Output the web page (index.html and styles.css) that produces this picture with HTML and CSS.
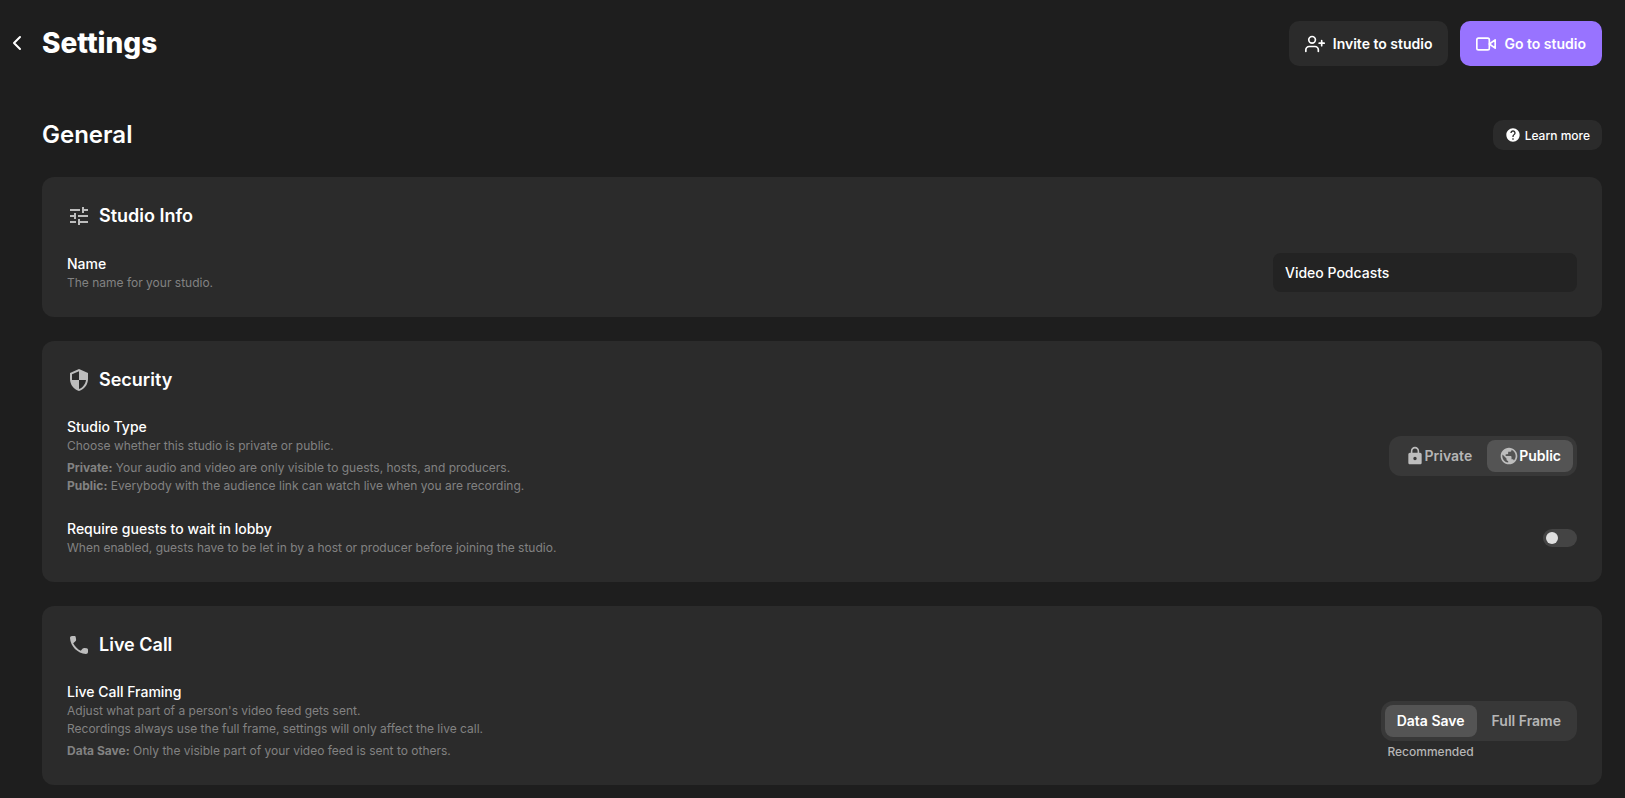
FILE: index.html
```
<!DOCTYPE html>
<html lang="en">
    <head>
        <meta charset="UTF-8">
        <meta name="viewport" content="width=device-width, initial-scale=1.0">
        <title>Settings</title>
        <link rel="stylesheet" href="styles.css">
    </head>
    <body>
        <header class="topbar">
            <button type="button" class="back" aria-label="Back">
                <svg width="24" height="24" viewBox="0 0 24 24" fill="none" stroke="currentColor" stroke-width="2" stroke-linecap="round" stroke-linejoin="round"><path d="M15 17l-6-6 6-6"/></svg>
            </button>
            <h1>Settings</h1>
            <div class="actions">
                <button type="button" class="btn">
                    <svg width="20" height="20" viewBox="0 0 24 24" fill="none" stroke="currentColor" stroke-width="2" stroke-linecap="round" stroke-linejoin="round"><path d="M16 21v-2a4 4 0 0 0-4-4H5a4 4 0 0 0-4 4v2"/><circle cx="8.5" cy="7" r="4"/><path d="M20 8v6M23 11h-6"/></svg>
                    Invite to studio
                </button>
                <button type="button" class="btn btn-primary">
                    <svg width="20" height="20" viewBox="0 0 24 24" fill="none" stroke="currentColor" stroke-width="2" stroke-linecap="round" stroke-linejoin="round"><path d="M23 7l-7 5 7 5V7z"/><rect x="1" y="5" width="15" height="14" rx="2"/></svg>
                    Go to studio
                </button>
            </div>
        </header>

        <main>
            <div class="section-head">
                <h2>General</h2>
                <button type="button" class="btn-small">
                    <svg width="16" height="16" viewBox="0 0 24 24" fill="currentColor"><path d="M12 2C6.48 2 2 6.48 2 12s4.48 10 10 10 10-4.48 10-10S17.52 2 12 2zm1 17h-2v-2h2v2zm2.07-7.75l-.9.92C13.45 12.9 13 13.5 13 15h-2v-.5c0-1.1.45-2.1 1.17-2.83l1.24-1.26c.37-.36.59-.86.59-1.41 0-1.1-.9-2-2-2s-2 .9-2 2H8c0-2.21 1.79-4 4-4s4 1.79 4 4c0 .88-.36 1.68-.93 2.25z"/></svg>
                    Learn more
                </button>
            </div>

            <section class="card">
                <h3>
                    <svg width="24" height="24" viewBox="0 0 24 24" fill="currentColor"><path d="M3 17v2h6v-2H3zM3 5v2h10V5H3zm10 16v-2h8v-2h-8v-2h-2v6h2zM7 9v2H3v2h4v2h2V9H7zm14 4v-2H11v2h10zm-6-4h2V7h4V5h-4V3h-2v6z"/></svg>
                    Studio Info
                </h3>
                <div class="row">
                    <div class="info">
                        <label class="title" for="studioName">Name</label>
                        <p>The name for your studio.</p>
                    </div>
                    <input type="text" class="text-input" id="studioName" value="Video Podcasts">
                </div>
            </section>

            <section class="card">
                <h3>
                    <svg width="24" height="24" viewBox="0 0 24 24" fill="currentColor"><path d="M12 1L3 5v6c0 5.55 3.84 10.74 9 12 5.16-1.26 9-6.45 9-12V5l-9-4zm0 10.99h7c-.53 4.12-3.28 7.79-7 8.94V12H5V6.3l7-3.11v8.8z"/></svg>
                    Security
                </h3>
                <div class="row">
                    <div class="info">
                        <div class="title" id="typeTitle">Studio Type</div>
                        <p>Choose whether this studio is private or public.</p>
                        <p class="detail"><b>Private:</b> Your audio and video are only visible to guests, hosts, and producers.</p>
                        <p><b>Public:</b> Everybody with the audience link can watch live when you are recording.</p>
                    </div>
                    <div class="segmented" role="radiogroup" aria-labelledby="typeTitle">
                        <input type="radio" name="studioType" id="typePrivate">
                        <label for="typePrivate">
                            <svg width="20" height="20" viewBox="0 0 24 24" fill="currentColor"><path d="M18 8h-1V6c0-2.76-2.24-5-5-5S7 3.24 7 6v2H6c-1.1 0-2 .9-2 2v10c0 1.1.9 2 2 2h12c1.1 0 2-.9 2-2V10c0-1.1-.9-2-2-2zm-6 9c-1.1 0-2-.9-2-2s.9-2 2-2 2 .9 2 2-.9 2-2 2zm3.1-9H8.9V6c0-1.71 1.39-3.1 3.1-3.1s3.1 1.39 3.1 3.1v2z"/></svg>
                            Private
                        </label>
                        <input type="radio" name="studioType" id="typePublic" checked>
                        <label for="typePublic">
                            <svg width="20" height="20" viewBox="0 0 24 24" fill="currentColor"><path d="M12 2C6.48 2 2 6.48 2 12s4.48 10 10 10 10-4.48 10-10S17.52 2 12 2zm-1 17.93c-3.95-.49-7-3.85-7-7.93 0-.62.08-1.21.21-1.79L9 15v1c0 1.1.9 2 2 2v1.93zm6.9-2.54c-.26-.81-1-1.39-1.9-1.39h-1v-3c0-.55-.45-1-1-1H8v-2h2c.55 0 1-.45 1-1V7h2c1.1 0 2-.9 2-2v-.41c2.93 1.19 5 4.06 5 7.41 0 2.08-.8 3.97-2.1 5.39z"/></svg>
                            Public
                        </label>
                    </div>
                </div>
                <div class="row">
                    <div class="info">
                        <label class="title" for="lobby">Require guests to wait in lobby</label>
                        <p>When enabled, guests have to be let in by a host or producer before joining the studio.</p>
                    </div>
                    <input type="checkbox" class="toggle" id="lobby">
                </div>
            </section>

            <section class="card">
                <h3>
                    <svg width="24" height="24" viewBox="0 0 24 24" fill="currentColor"><path d="M5 3h2.2C8.1 3 8.7 3.5 8.8 4.4l.3 2c.1.8-.1 1.4-.7 1.9L6.2 10.2c1.6 3.2 4.3 5.9 7.6 7.6l1.9-2.2c.5-.6 1.1-.8 1.9-.7l2 .3c.9.1 1.4.7 1.4 1.6V19c0 1.2-.9 2-2.1 2C10.5 20.5 3.5 13.5 3 5.1 3 3.9 3.8 3 5 3z"/></svg>
                    Live Call
                </h3>
                <div class="row">
                    <div class="info">
                        <div class="title" id="framingTitle">Live Call Framing</div>
                        <p>Adjust what part of a person's video feed gets sent.</p>
                        <p>Recordings always use the full frame, settings will only affect the live call.</p>
                        <p class="detail"><b>Data Save:</b> Only the visible part of your video feed is sent to others.</p>
                    </div>
                    <div class="segmented" role="radiogroup" aria-labelledby="framingTitle">
                        <input type="radio" name="framing" id="dataSave" checked>
                        <label for="dataSave">Data Save <span class="hint">Recommended</span></label>
                        <input type="radio" name="framing" id="fullFrame">
                        <label for="fullFrame">Full Frame</label>
                    </div>
                </div>
            </section>
        </main>
    </body>
</html>
```
FILE: styles.css
```
* {
    box-sizing: border-box;
}

body {
    margin: 0;
    padding: 21px 23px 12px 0;
    background-color: #1e1e1e;
    color: #fff;
    font-family: 'Inter', 'Liberation Sans', sans-serif;
    font-size: 14px;
    line-height: 20px;
}

h1,
h2,
h3,
p {
    margin: 0;
}

svg {
    flex-shrink: 0;
}

button {
    border: none;
    color: #fff;
    font-family: inherit;
    cursor: pointer;
}

.topbar {
    display: flex;
    align-items: center;
    padding-left: 5px;
}

.back {
    display: flex;
    margin-right: 13px;
    padding: 0;
    background: none;
}

h1 {
    padding-bottom: 2px;
    font-size: 28px;
    line-height: 42px;
    font-weight: 800;
}

.actions {
    display: flex;
    gap: 12px;
    margin-left: auto;
}

.btn {
    display: flex;
    align-items: center;
    gap: 8px;
    height: 45px;
    padding: 0 16px;
    border-radius: 10px;
    background-color: #2b2b2b;
    font-size: 14px;
    font-weight: 600;
}

.btn-primary {
    background-color: #9873ff;
}

main {
    margin-left: 42px;
}

.section-head {
    display: flex;
    justify-content: space-between;
    align-items: center;
    margin-top: 51px;
    margin-bottom: 24px;
}

h2 {
    font-size: 24px;
    line-height: 36px;
    font-weight: 600;
}

.btn-small {
    display: flex;
    align-items: center;
    gap: 4px;
    height: 30px;
    padding: 0 12px;
    border-radius: 10px;
    background-color: #2b2b2b;
    font-size: 12px;
    font-weight: 500;
}

.card {
    display: flex;
    flex-direction: column;
    gap: 24px;
    margin-bottom: 24px;
    padding: 25px;
    border-radius: 12px;
    background-color: #2b2b2b;
}

h3 {
    display: flex;
    align-items: center;
    gap: 8px;
    font-size: 18px;
    line-height: 27px;
    font-weight: 600;
}

h3 svg {
    color: #bdbdbd;
}

.row {
    display: flex;
    justify-content: space-between;
    align-items: center;
    gap: 24px;
}

.title {
    display: block;
    font-weight: 500;
}

.info p {
    color: #828282;
    font-size: 12px;
    line-height: 18px;
}

.info .detail {
    margin-top: 4px;
}

.info b {
    font-weight: 700;
}

.text-input {
    width: 304px;
    height: 39px;
    padding: 0 12px;
    border: none;
    border-radius: 8px;
    background-color: #232323;
    color: #fff;
    font-family: inherit;
    font-size: 14px;
    font-weight: 500;
}

.segmented {
    position: relative;
    display: flex;
    gap: 3px;
    padding: 4px;
    border-radius: 12px;
    background-color: #383838;
}

.segmented input {
    position: absolute;
    opacity: 0;
}

.segmented label {
    position: relative;
    display: flex;
    align-items: center;
    height: 32px;
    padding: 0 12px;
    border-radius: 8px;
    color: #b5b5b5;
    font-weight: 600;
    cursor: pointer;
}

.segmented label svg {
    color: #bdbdbd;
}

.segmented input:checked + label {
    background-color: #545454;
    color: #fff;
}

/* sits under its option, outside the pill */
.hint {
    position: absolute;
    top: 100%;
    left: 0;
    right: 0;
    padding-top: 5px;
    color: #b5b5b5;
    font-size: 12px;
    font-weight: 500;
    text-align: center;
}

.toggle {
    appearance: none;
    width: 34px;
    height: 18px;
    margin: 0;
    padding: 3px;
    border-radius: 9px;
    background-color: #444;
    cursor: pointer;
}

.toggle::before {
    content: '';
    display: block;
    width: 12px;
    height: 12px;
    border-radius: 50%;
    background-color: #e0e0e0;
}

.toggle:checked::before {
    margin-left: auto;
}
```
